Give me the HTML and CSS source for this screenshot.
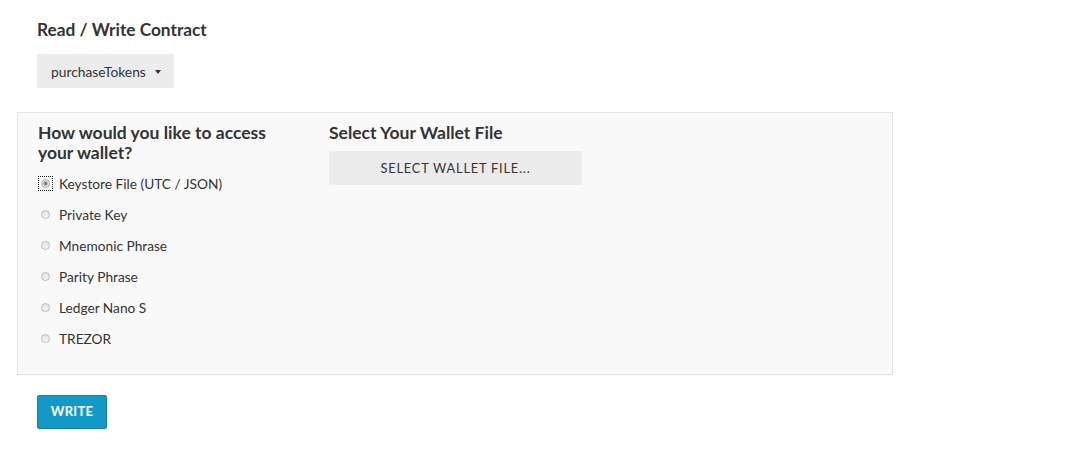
FILE: index.html
```html
<!DOCTYPE html>
<html>
<head>
<meta charset="utf-8">
<link rel="stylesheet" href="styles.css">
</head>
<body>
<main class="page">
  <h2 class="title">Read / Write Contract</h2>
  <button class="dropdown">purchaseTokens <span class="caret"></span></button>

  <section class="panel">
    <div class="col col-left">
      <h4 class="panel-heading">How would you like to access your wallet?</h4>
      <ul class="radios">
        <li class="radio"><span class="dot-wrap focus"><span class="dot checked"></span></span>Keystore File (UTC / JSON)</li>
        <li class="radio"><span class="dot-wrap"><span class="dot"></span></span>Private Key</li>
        <li class="radio"><span class="dot-wrap"><span class="dot"></span></span>Mnemonic Phrase</li>
        <li class="radio"><span class="dot-wrap"><span class="dot"></span></span>Parity Phrase</li>
        <li class="radio"><span class="dot-wrap"><span class="dot"></span></span>Ledger Nano S</li>
        <li class="radio"><span class="dot-wrap"><span class="dot"></span></span>TREZOR</li>
      </ul>
    </div>
    <div class="col col-right">
      <h4 class="panel-heading">Select Your Wallet File</h4>
      <button class="file-btn">SELECT WALLET FILE...</button>
    </div>
  </section>

  <button class="write-btn">WRITE</button>
</main>
</body>
</html>
```

FILE: styles.css
```css
* { box-sizing: border-box; }
html, body { margin: 0; padding: 0; background: #fff; }
body {
  font-family: Lato, "Open Sans", "Liberation Sans", sans-serif;
  color: #333;
}
.page {
  padding: 19px 0 0 17px;
  width: 893px;
}
.title {
  margin: 0 0 0 20px;
  font-size: 17.3px;
  font-weight: 700;
  line-height: 22px;
  color: #333;
}
.dropdown {
  display: inline-flex;
  align-items: center;
  margin: 13px 0 0 20px;
  height: 34px;
  width: 137px;
  padding: 0 0 0 14px;
  border: none;
  background: #ececec;
  font-family: inherit;
  font-size: 13.8px;
  color: #333;
}
.caret {
  display: inline-block;
  margin-left: 9px;
  margin-top: 1px;
  width: 0; height: 0;
  border-left: 3.5px solid transparent;
  border-right: 3.5px solid transparent;
  border-top: 4px solid #333;
}
.panel {
  display: flex;
  margin-top: 24px;
  height: 263px;
  border: 1px solid #e3e3e3;
  background: #f9f9f9;
  padding: 10px 20px 0 20px;
}
.col-left { width: 291px; padding-right: 30px; }
.col-right { width: 253px; }
.panel-heading {
  margin: 0;
  font-size: 17.5px;
  font-weight: 700;
  line-height: 20px;
  color: #333;
}
.radios {
  list-style: none;
  margin: 5px 0 0 0;
  padding: 0;
}
.radio {
  display: flex;
  align-items: center;
  height: 31px;
  font-size: 13.7px;
  color: #333;
}
.dot-wrap {
  display: inline-flex;
  align-items: center;
  justify-content: center;
  width: 13px;
  height: 13px;
  margin: 0 7px 0 1px;
}
.dot-wrap.focus { outline: 1px dotted #222; outline-offset: 0; }
.dot {
  width: 9px;
  height: 9px;
  border-radius: 50%;
  border: 1px solid #b9b9b9;
  background: linear-gradient(#e4e4e4, #f5f5f5);
}
.dot.checked {
  background: radial-gradient(circle, #7a7a7a 0, #8a8a8a 1.6px, #dcdcdc 2.4px, #eeeeee 100%);
  border-color: #b0b0b0;
}
.file-btn {
  display: block;
  margin-top: 8px;
  width: 253px;
  height: 34px;
  border: none;
  background: #ebebeb;
  font-family: inherit;
  font-size: 12.8px;
  letter-spacing: 0.8px;
  color: #333;
}
.write-btn {
  margin: 20px 0 0 20px;
  width: 70px;
  height: 34px;
  padding: 0 0 3px 0;
  background: #1499c6;
  border: 1px solid #0f83ab;
  border-radius: 2px;
  color: #fff;
  font-family: inherit;
  font-size: 13px;
  font-weight: 700;
  letter-spacing: 0.3px;
}
```
